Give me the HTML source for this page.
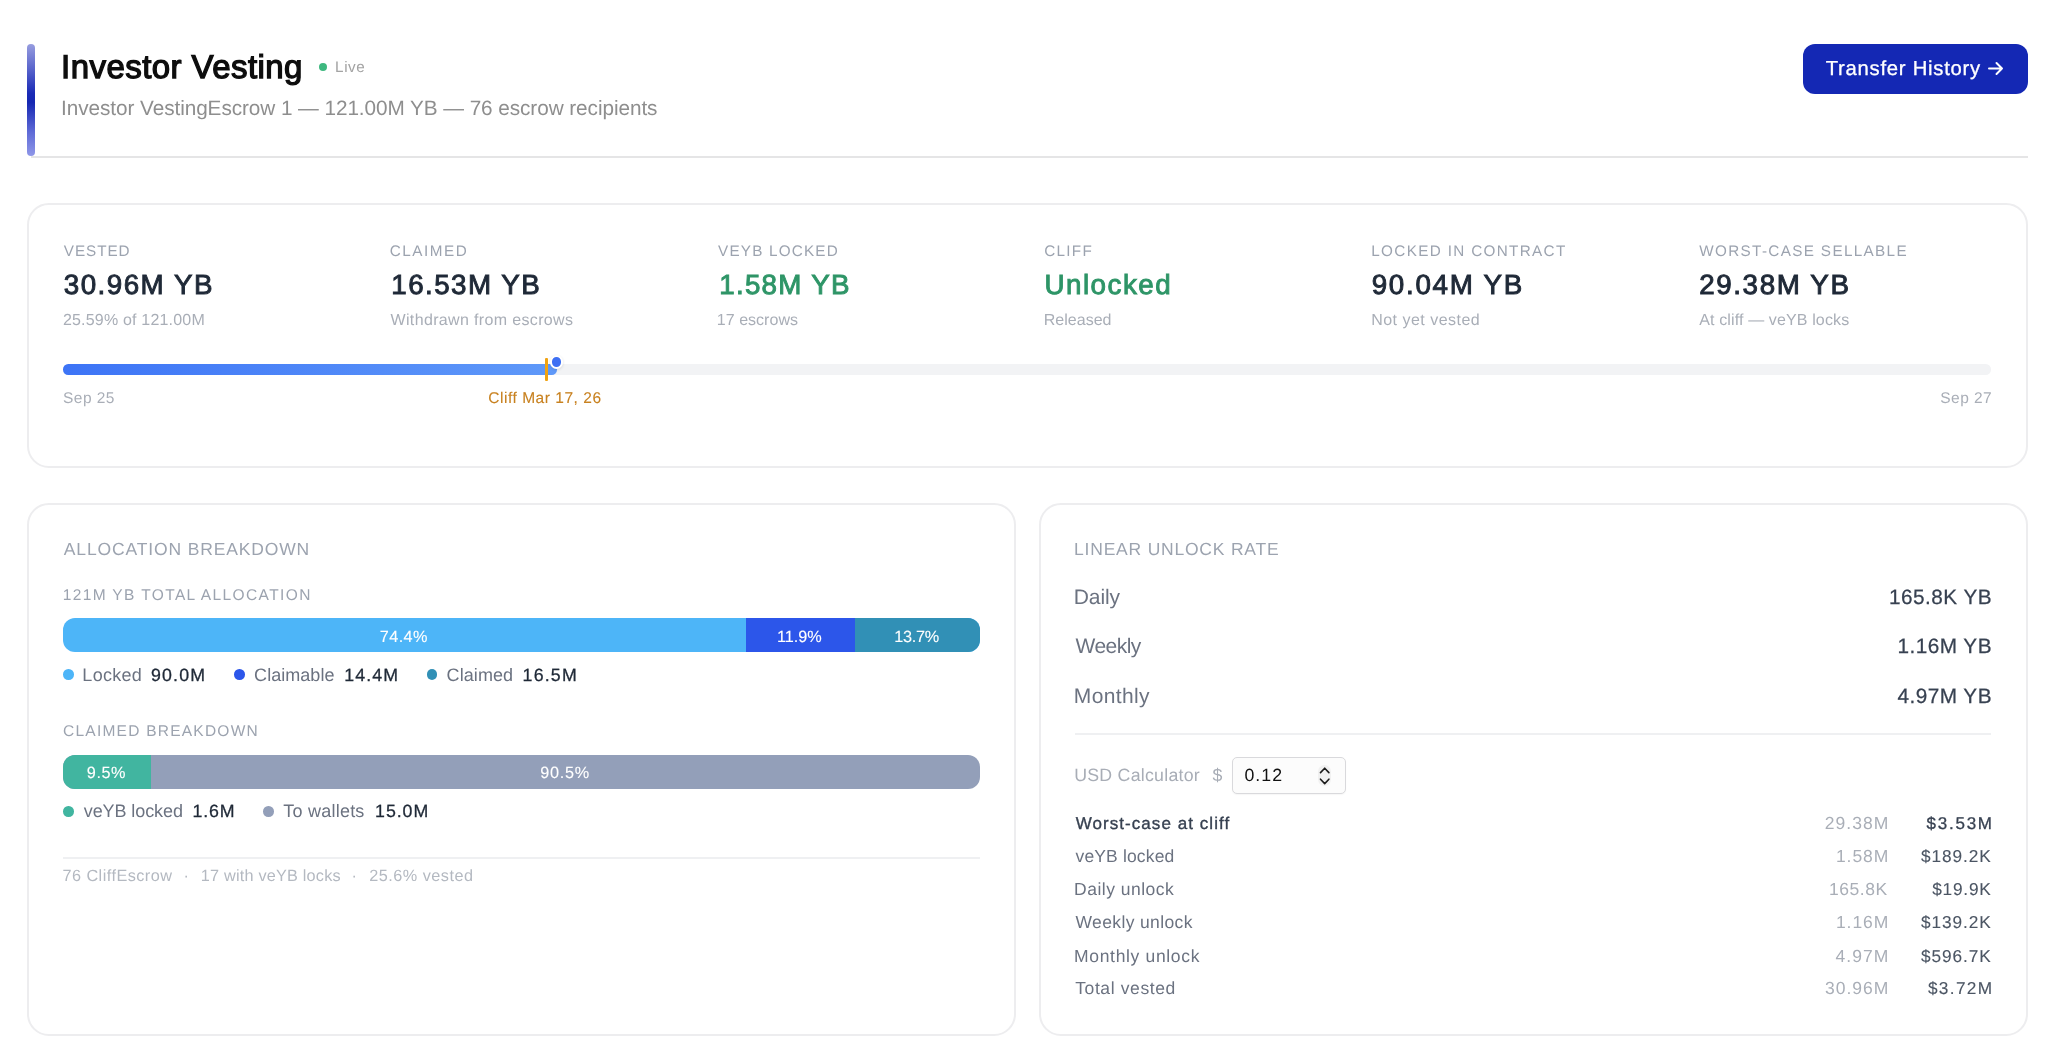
<!DOCTYPE html>
<html lang="en">
<head>
<meta charset="utf-8">
<title>Investor Vesting</title>
<style>
*{box-sizing:border-box;margin:0;padding:0}
html,body{width:2048px;height:1049px;overflow:hidden;background:#ffffff}
body{position:relative;font-family:"Liberation Sans",sans-serif;-webkit-font-smoothing:antialiased}
.t{position:absolute;white-space:pre;line-height:1;font-family:"Liberation Sans",sans-serif;font-weight:400}
.abs{position:absolute}
.card{position:absolute;border:2px solid #ededef;border-radius:22px;background:#ffffff}
.dot{position:absolute;width:10.6px;height:10.6px;border-radius:50%}
.hr{position:absolute;height:2px;background:#eff0f2}
</style>
</head>
<body>
<div id="root" style="position:absolute;left:0;top:0;width:2048px;height:1049px;will-change:transform;text-rendering:geometricPrecision">
<!-- header -->
<div class="abs" style="left:31px;top:156px;width:1997px;height:2px;background:#e5e5e6"></div>
<div class="abs" style="left:27px;top:44px;width:8px;height:112px;border-radius:4px;background:linear-gradient(180deg,#979ddf 0%,#5a65cc 22%,#1a2bb6 44%,#1527b2 52%,#5d69d6 78%,#8f97e8 100%)"></div>
<div class="abs" style="left:318.75px;top:62.5px;width:8px;height:8px;border-radius:50%;background:#3eb87f"></div>
<div class="abs" style="left:1802.5px;top:44px;width:225.5px;height:50px;border-radius:12px;background:#1428b4"></div>
<svg class="abs" style="left:1986px;top:58px" width="20" height="20" viewBox="0 0 20 20" fill="none" stroke="#fff" stroke-width="2" stroke-linecap="round" stroke-linejoin="round"><path d="M3 10.5H16M10.5 5L16 10.5L10.5 16"/></svg>

<!-- cards -->
<div class="card" style="left:27px;top:202.75px;width:2001px;height:265.5px"></div>
<div class="card" style="left:27px;top:502.5px;width:988.5px;height:533px"></div>
<div class="card" style="left:1038.75px;top:502.5px;width:989.25px;height:533px"></div>

<!-- progress -->
<div class="abs" style="left:63px;top:364px;width:1928px;height:10.5px;border-radius:5.25px;background:#f2f3f5"></div>
<div class="abs" style="left:63px;top:364px;width:494px;height:10.5px;border-radius:5.25px;background:linear-gradient(90deg,#3d74f6 0%,#5f99f9 100%)"></div>
<div class="abs" style="left:544.6px;top:358px;width:3.6px;height:23px;border-radius:1px;background:#f0a313"></div>
<div class="abs" style="left:549.6px;top:355px;width:13.8px;height:13.8px;border-radius:50%;background:#3d6ff3;border:2.3px solid #fff;box-shadow:0 1px 3px rgba(0,0,0,.12)"></div>

<!-- allocation bar -->
<div class="abs" style="left:63px;top:618px;width:917px;height:34px;border-radius:12px;overflow:hidden;background:#4db5f8">
  <div class="abs" style="left:682.5px;top:0;width:109.5px;height:34px;background:#2c56ea"></div>
  <div class="abs" style="left:792px;top:0;width:125px;height:34px;background:#3190b6"></div>
</div>
<div class="dot" style="left:63.3px;top:669.2px;background:#4db5f8"></div>
<div class="dot" style="left:234.45px;top:669.2px;background:#2c56ea"></div>
<div class="dot" style="left:426.7px;top:669.2px;background:#3190b6"></div>

<!-- claimed bar -->
<div class="abs" style="left:63px;top:755px;width:917px;height:34px;border-radius:12px;overflow:hidden;background:#939fb9">
  <div class="abs" style="left:0;top:0;width:87.5px;height:34px;background:#41b5a0"></div>
</div>
<div class="dot" style="left:63.3px;top:806.4px;background:#41b5a0"></div>
<div class="dot" style="left:263.45px;top:806.4px;background:#939fb9"></div>
<div class="hr" style="left:63px;top:856.5px;width:917px"></div>

<!-- right card -->
<div class="hr" style="left:1075px;top:732.5px;width:916px"></div>
<div class="abs" style="left:1232px;top:757px;width:114px;height:37px;border:1.5px solid #d9d9dc;border-radius:5px;background:#fcfcfc;box-shadow:0 1px 1.5px rgba(0,0,0,.04)"></div>
<div class="abs" style="left:1317.5px;top:765px;width:13.5px;height:20.5px;border-radius:6.5px;background:#f1f1f1"></div>
<svg class="abs" style="left:1315.5px;top:764.5px" width="17.5" height="21.5" viewBox="0 0 17.5 21.5" fill="none" stroke="#1c1c1c" stroke-width="1.6" stroke-linecap="round" stroke-linejoin="round"><path d="M4.5 7.6L8.7 3.2L12.9 7.6M4.5 14.2L8.7 18.6L12.9 14.2"/></svg>

<span class="t" style="left:61.07px;top:50.00px;font-size:33px;color:#0d0d0d;letter-spacing:0.44px;-webkit-text-stroke:1.3px #0d0d0d;">Investor Vesting</span>
<span class="t" style="left:335.10px;top:60.01px;font-size:15.25px;color:#a3a3a3;letter-spacing:0.57px;">Live</span>
<span class="t" style="left:61.10px;top:99.00px;font-size:20.75px;color:#8e8e8e;letter-spacing:-0.07px;">Investor VestingEscrow 1 — 121.00M YB — 76 escrow recipients</span>
<span class="t" style="left:1825.75px;top:59.00px;font-size:20.25px;color:#ffffff;letter-spacing:0.74px;-webkit-text-stroke:0.3px #ffffff;">Transfer History</span>
<span class="t" style="left:63.75px;top:244.01px;font-size:15.25px;color:#9ca3af;letter-spacing:0.97px;">VESTED</span>
<span class="t" style="left:389.80px;top:244.01px;font-size:15.25px;color:#9ca3af;letter-spacing:1.52px;">CLAIMED</span>
<span class="t" style="left:718.00px;top:244.01px;font-size:15.25px;color:#9ca3af;letter-spacing:1.21px;">VEYB LOCKED</span>
<span class="t" style="left:1044.30px;top:244.01px;font-size:15.25px;color:#9ca3af;letter-spacing:1.28px;">CLIFF</span>
<span class="t" style="left:1371.30px;top:244.01px;font-size:15.25px;color:#9ca3af;letter-spacing:1.34px;">LOCKED IN CONTRACT</span>
<span class="t" style="left:1699.25px;top:244.01px;font-size:15.25px;color:#9ca3af;letter-spacing:1.35px;">WORST-CASE SELLABLE</span>
<span class="t" style="left:63.71px;top:271.01px;font-size:27.75px;color:#1f2937;letter-spacing:1.49px;-webkit-text-stroke:0.95px #1f2937;">30.96M YB</span>
<span class="t" style="left:391.24px;top:271.01px;font-size:27.75px;color:#1f2937;letter-spacing:1.46px;-webkit-text-stroke:0.95px #1f2937;">16.53M YB</span>
<span class="t" style="left:719.24px;top:271.01px;font-size:27.75px;color:#2e9567;letter-spacing:1.26px;-webkit-text-stroke:0.95px #2e9567;">1.58M YB</span>
<span class="t" style="left:1044.49px;top:271.01px;font-size:27.75px;color:#2e9567;letter-spacing:1.49px;-webkit-text-stroke:0.95px #2e9567;">Unlocked</span>
<span class="t" style="left:1371.67px;top:271.01px;font-size:27.75px;color:#1f2937;letter-spacing:1.72px;-webkit-text-stroke:0.95px #1f2937;">90.04M YB</span>
<span class="t" style="left:1699.17px;top:271.01px;font-size:27.75px;color:#1f2937;letter-spacing:1.62px;-webkit-text-stroke:0.95px #1f2937;">29.38M YB</span>
<span class="t" style="left:62.95px;top:313.00px;font-size:16px;color:#a9aeb7;letter-spacing:0.19px;">25.59% of 121.00M</span>
<span class="t" style="left:390.50px;top:313.00px;font-size:16px;color:#a9aeb7;letter-spacing:0.35px;">Withdrawn from escrows</span>
<span class="t" style="left:716.80px;top:313.00px;font-size:16px;color:#a9aeb7;letter-spacing:0.03px;">17 escrows</span>
<span class="t" style="left:1043.70px;top:313.00px;font-size:16px;color:#a9aeb7;letter-spacing:0.03px;">Released</span>
<span class="t" style="left:1371.20px;top:313.00px;font-size:16px;color:#a9aeb7;letter-spacing:0.48px;">Not yet vested</span>
<span class="t" style="left:1699.25px;top:313.00px;font-size:16px;color:#a9aeb7;letter-spacing:0.13px;">At cliff — veYB locks</span>
<span class="t" style="left:63.05px;top:391.00px;font-size:15.5px;color:#a9aeb7;letter-spacing:0.44px;">Sep 25</span>
<span class="t" style="left:488.25px;top:391.00px;font-size:15.5px;color:#c8811f;letter-spacing:0.53px;-webkit-text-stroke:0.1px #c8811f;">Cliff Mar 17, 26</span>
<span class="t" style="left:1940.30px;top:391.00px;font-size:15.5px;color:#a9aeb7;letter-spacing:0.46px;">Sep 27</span>
<span class="t" style="left:63.75px;top:541.00px;font-size:17.5px;color:#9ca3af;letter-spacing:0.86px;">ALLOCATION BREAKDOWN</span>
<span class="t" style="left:62.65px;top:588.00px;font-size:15.5px;color:#9ca3af;letter-spacing:1.38px;">121M YB TOTAL ALLOCATION</span>
<span class="t" style="left:379.75px;top:629.01px;font-size:16.25px;color:#fff;letter-spacing:0.42px;-webkit-text-stroke:0.1px #fff;">74.4%</span>
<span class="t" style="left:777.10px;top:629.01px;font-size:16.25px;color:#fff;letter-spacing:-0.06px;-webkit-text-stroke:0.1px #fff;">11.9%</span>
<span class="t" style="left:894.35px;top:629.01px;font-size:16.25px;color:#fff;letter-spacing:-0.29px;-webkit-text-stroke:0.1px #fff;">13.7%</span>
<span class="t" style="left:82.35px;top:666.01px;font-size:18px;color:#6b7280;letter-spacing:0.29px;">Locked</span>
<span class="t" style="left:151.10px;top:667.01px;font-size:17.75px;color:#1f2937;letter-spacing:1.14px;-webkit-text-stroke:0.3px #1f2937;">90.0M</span>
<span class="t" style="left:254.10px;top:666.01px;font-size:18px;color:#6b7280;letter-spacing:0.04px;">Claimable</span>
<span class="t" style="left:344.35px;top:667.01px;font-size:17.75px;color:#1f2937;letter-spacing:1.08px;-webkit-text-stroke:0.3px #1f2937;">14.4M</span>
<span class="t" style="left:446.60px;top:666.01px;font-size:18px;color:#6b7280;letter-spacing:0.08px;">Claimed</span>
<span class="t" style="left:522.60px;top:667.01px;font-size:17.75px;color:#1f2937;letter-spacing:1.2px;-webkit-text-stroke:0.3px #1f2937;">16.5M</span>
<span class="t" style="left:63.05px;top:724.00px;font-size:15.5px;color:#9ca3af;letter-spacing:1.24px;">CLAIMED BREAKDOWN</span>
<span class="t" style="left:86.85px;top:765.01px;font-size:16.25px;color:#fff;letter-spacing:0.54px;-webkit-text-stroke:0.1px #fff;">9.5%</span>
<span class="t" style="left:540.35px;top:765.01px;font-size:16.25px;color:#fff;letter-spacing:0.71px;-webkit-text-stroke:0.1px #fff;">90.5%</span>
<span class="t" style="left:83.75px;top:802.01px;font-size:18px;color:#6b7280;letter-spacing:-0.09px;">veYB locked</span>
<span class="t" style="left:192.60px;top:803.01px;font-size:17.75px;color:#1f2937;letter-spacing:0.81px;-webkit-text-stroke:0.3px #1f2937;">1.6M</span>
<span class="t" style="left:283.35px;top:802.01px;font-size:18px;color:#6b7280;letter-spacing:0.22px;">To wallets</span>
<span class="t" style="left:375.10px;top:803.01px;font-size:17.75px;color:#1f2937;letter-spacing:0.95px;-webkit-text-stroke:0.3px #1f2937;">15.0M</span>
<span class="t" style="left:62.45px;top:868.01px;font-size:16.25px;color:#b4b9c1;letter-spacing:0.46px;">76 CliffEscrow</span>
<span class="t" style="left:183.60px;top:868.01px;font-size:16.25px;color:#b4b9c1;">·</span>
<span class="t" style="left:200.80px;top:868.01px;font-size:16.25px;color:#b4b9c1;letter-spacing:0.2px;">17 with veYB locks</span>
<span class="t" style="left:351.60px;top:868.01px;font-size:16.25px;color:#b4b9c1;">·</span>
<span class="t" style="left:369.20px;top:868.01px;font-size:16.25px;color:#b4b9c1;letter-spacing:0.49px;">25.6% vested</span>
<span class="t" style="left:1074.10px;top:541.00px;font-size:17.5px;color:#9ca3af;letter-spacing:0.78px;">LINEAR UNLOCK RATE</span>
<span class="t" style="left:1073.80px;top:587.00px;font-size:21px;color:#6b7280;letter-spacing:-0.12px;">Daily</span>
<span class="t" style="left:1075.50px;top:636.00px;font-size:21px;color:#6b7280;letter-spacing:-0.54px;">Weekly</span>
<span class="t" style="left:1073.80px;top:686.00px;font-size:21px;color:#6b7280;letter-spacing:0.36px;">Monthly</span>
<span class="t" style="left:1889.12px;top:588.00px;font-size:20.75px;color:#374151;letter-spacing:0.45px;-webkit-text-stroke:0.25px #374151;">165.8K YB</span>
<span class="t" style="left:1897.62px;top:637.00px;font-size:20.75px;color:#374151;letter-spacing:0.45px;-webkit-text-stroke:0.25px #374151;">1.16M YB</span>
<span class="t" style="left:1897.47px;top:687.00px;font-size:20.75px;color:#374151;letter-spacing:0.47px;-webkit-text-stroke:0.25px #374151;">4.97M YB</span>
<span class="t" style="left:1074.20px;top:767.01px;font-size:17.75px;color:#a8adb6;letter-spacing:0.25px;">USD Calculator</span>
<span class="t" style="left:1212.40px;top:767.01px;font-size:17.75px;color:#a8adb6;">$</span>
<span class="t" style="left:1244.40px;top:767.01px;font-size:17.75px;color:#111111;letter-spacing:1.06px;">0.12</span>
<span class="t" style="left:1075.67px;top:815.00px;font-size:17px;color:#374151;letter-spacing:1.06px;-webkit-text-stroke:0.35px #374151;">Worst-case at cliff</span>
<span class="t" style="left:1824.70px;top:815.00px;font-size:17.5px;color:#a9aeb7;letter-spacing:1.06px;">29.38M</span>
<span class="t" style="left:1926.55px;top:815.00px;font-size:17px;color:#374151;letter-spacing:1.75px;-webkit-text-stroke:0.3px #374151;">$3.53M</span>
<span class="t" style="left:1075.50px;top:848.00px;font-size:17.5px;color:#6b7280;letter-spacing:0.15px;">veYB locked</span>
<span class="t" style="left:1835.95px;top:848.00px;font-size:17.5px;color:#a9aeb7;letter-spacing:0.95px;">1.58M</span>
<span class="t" style="left:1920.95px;top:848.01px;font-size:17.25px;color:#4b5563;letter-spacing:0.94px;-webkit-text-stroke:0.1px #4b5563;">$189.2K</span>
<span class="t" style="left:1074.10px;top:881.00px;font-size:17.5px;color:#6b7280;letter-spacing:0.48px;">Daily unlock</span>
<span class="t" style="left:1828.95px;top:881.00px;font-size:17.5px;color:#a9aeb7;letter-spacing:0.55px;">165.8K</span>
<span class="t" style="left:1932.20px;top:881.01px;font-size:17.25px;color:#4b5563;letter-spacing:0.8px;-webkit-text-stroke:0.1px #4b5563;">$19.9K</span>
<span class="t" style="left:1075.50px;top:914.00px;font-size:17.5px;color:#6b7280;letter-spacing:0.37px;">Weekly unlock</span>
<span class="t" style="left:1835.95px;top:914.00px;font-size:17.5px;color:#a9aeb7;letter-spacing:0.95px;">1.16M</span>
<span class="t" style="left:1920.95px;top:914.01px;font-size:17.25px;color:#4b5563;letter-spacing:0.94px;-webkit-text-stroke:0.1px #4b5563;">$139.2K</span>
<span class="t" style="left:1074.10px;top:948.00px;font-size:17.5px;color:#6b7280;letter-spacing:0.66px;">Monthly unlock</span>
<span class="t" style="left:1835.60px;top:948.00px;font-size:17.5px;color:#a9aeb7;letter-spacing:1.03px;">4.97M</span>
<span class="t" style="left:1920.95px;top:948.01px;font-size:17.25px;color:#4b5563;letter-spacing:0.94px;-webkit-text-stroke:0.1px #4b5563;">$596.7K</span>
<span class="t" style="left:1075.20px;top:980.00px;font-size:17.5px;color:#6b7280;letter-spacing:0.61px;">Total vested</span>
<span class="t" style="left:1824.90px;top:980.00px;font-size:17.5px;color:#a9aeb7;letter-spacing:1.02px;">30.96M</span>
<span class="t" style="left:1927.95px;top:980.01px;font-size:17.25px;color:#4b5563;letter-spacing:1.33px;-webkit-text-stroke:0.1px #4b5563;">$3.72M</span>
</div>
</body>
</html>
